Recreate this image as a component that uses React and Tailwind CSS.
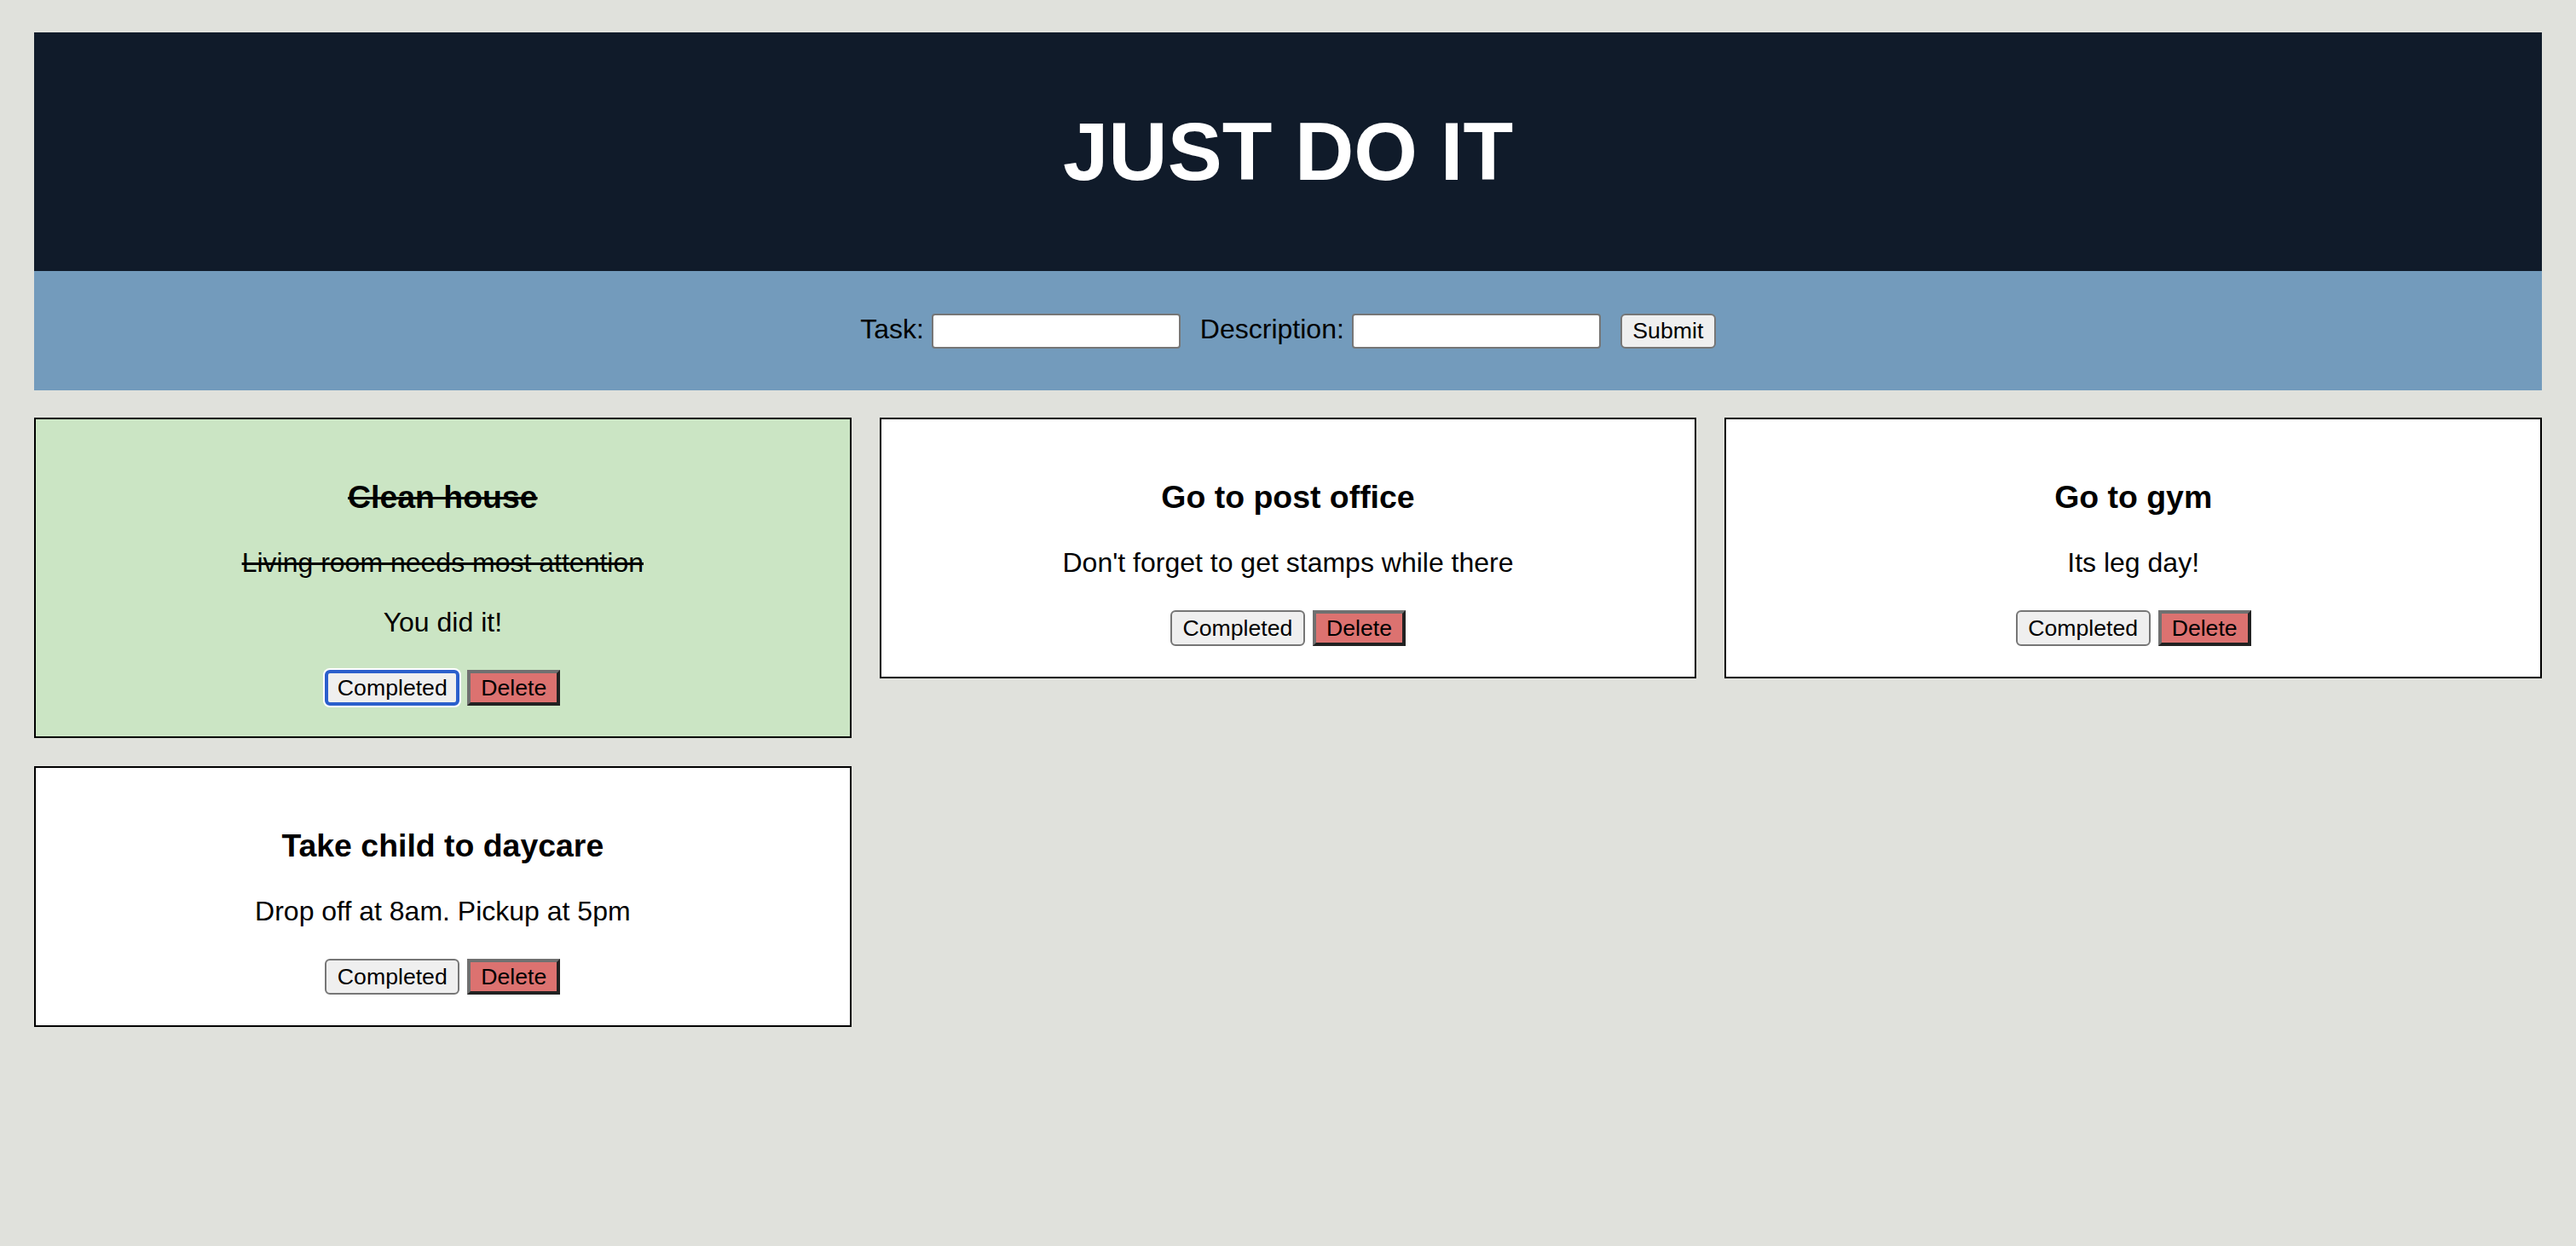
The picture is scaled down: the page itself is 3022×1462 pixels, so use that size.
import { useState } from 'react'

const initialTasks = [
  { id: 1, title: 'Clean house', description: 'Living room needs most attention', done: true },
  { id: 2, title: 'Go to post office', description: "Don't forget to get stamps while there", done: false },
  { id: 3, title: 'Go to gym', description: 'Its leg day!', done: false },
  { id: 4, title: 'Take child to daycare', description: 'Drop off at 8am. Pickup at 5pm', done: false },
]

function TaskCard({ task, onToggle, onDelete }) {
  return (
    <div className={`flex flex-col items-center border-2 border-black pt-[70px] pb-[36px] ${task.done ? 'bg-[#cbe5c4]' : 'bg-white'}`}>
      <h3 className={`text-[37.44px] font-bold leading-[42px] ${task.done ? 'line-through' : ''}`}>{task.title}</h3>
      <p className={`mt-[38px] text-[32px] leading-[37px] ${task.done ? 'line-through' : ''}`}>{task.description}</p>
      {task.done && <p className="mt-[33px] text-[32px] leading-[37px]">You did it!</p>}
      <div className="mt-[37px] flex items-center gap-[9px]">
        <button
          onClick={() => onToggle(task.id)}
          className={`h-[42px] w-[158px] rounded-[6px] bg-[#efefef] text-[26.67px] leading-none ${task.done ? 'border-[4px] border-[#2b5fcc] shadow-[0_0_0_2px_#ffffff]' : 'border-2 border-[#767676]'}`}
        >
          Completed
        </button>
        <button
          onClick={() => onDelete(task.id)}
          className="h-[42px] w-[109px] border-[4px] border-t-[#707070] border-l-[#707070] border-b-[#222222] border-r-[#222222] bg-[#dc7270] text-[26.67px] leading-none"
        >
          Delete
        </button>
      </div>
    </div>
  )
}

export default function App() {
  const [tasks, setTasks] = useState(initialTasks)
  const [title, setTitle] = useState('')
  const [description, setDescription] = useState('')

  const toggleTask = (id) => {
    setTasks((prev) => prev.map((task) => task.id === id ? { ...task, done: !task.done } : task))
  }

  const deleteTask = (id) => {
    setTasks((prev) => prev.filter((task) => task.id !== id))
  }

  const addTask = (e) => {
    e.preventDefault()
    if (!title) return
    setTasks((prev) => [...prev, { id: Date.now(), title, description, done: false }])
    setTitle('')
    setDescription('')
  }

  return (
    <div className="min-h-screen bg-[#e0e1dc] px-[40px] pt-[38px] pb-[40px] font-['Liberation_Sans',Arial,sans-serif] text-black">
      <header>
        <div className="flex h-[280px] items-center justify-center bg-[#101b2a]">
          <h1 className="text-[96px] font-bold leading-none text-white">JUST DO IT</h1>
        </div>
        <form onSubmit={addTask} className="flex h-[140px] items-center justify-center bg-[#739bbc]">
          <label className="flex items-center gap-[9px]">
            <span className="mb-[4px] text-[32px]">Task:</span>
            <input
              value={title}
              onChange={(e) => setTitle(e.target.value)}
              className="h-[41px] w-[292px] rounded-[4px] border-2 border-[#767676] bg-white px-[4px] text-[26.67px] outline-none"
            />
          </label>
          <label className="ml-[23px] flex items-center gap-[9px]">
            <span className="mb-[4px] text-[32px]">Description:</span>
            <input
              value={description}
              onChange={(e) => setDescription(e.target.value)}
              className="h-[41px] w-[292px] rounded-[4px] border-2 border-[#767676] bg-white px-[4px] text-[26.67px] outline-none"
            />
          </label>
          <button type="submit" className="ml-[23px] h-[41px] w-[112px] rounded-[6px] border-2 border-[#767676] bg-[#efefef] text-[26.67px] leading-none">
            Submit
          </button>
        </form>
      </header>

      <main className="mt-[32px] grid grid-cols-3 items-start gap-[33px]">
        {tasks.map((task) => (
          <TaskCard key={task.id} task={task} onToggle={toggleTask} onDelete={deleteTask} />
        ))}
      </main>
    </div>
  )
}
